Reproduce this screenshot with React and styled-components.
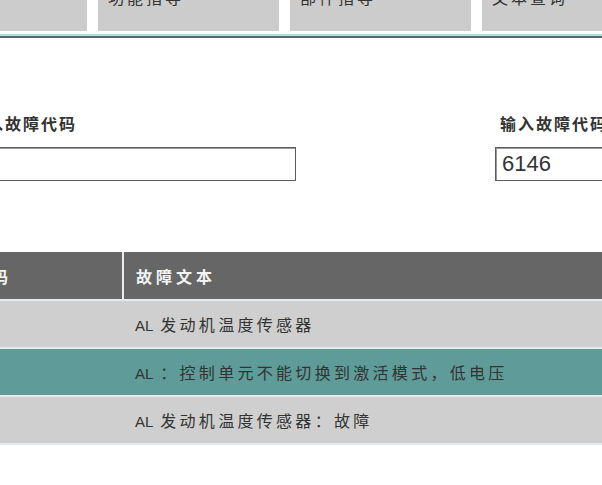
import styled, { createGlobalStyle } from "styled-components";

const GlobalStyle = createGlobalStyle`
	html, body {
		margin: 0;
		padding: 0;
		background: #ffffff;
		overflow: hidden;
	}
	body {
		font-family: "Liberation Sans", "Noto Sans CJK SC", sans-serif;
		color: #333333;
	}
`;

const Page = styled.div`
	width: 900px;
	margin-top: -15px;
	margin-left: -100px;
`;

const TabBar = styled.div`
	display: flex;
	gap: 11px;
	padding-left: 6px;
	padding-bottom: 3px;
	border-bottom: 2px solid #b9dcdb;
	box-shadow: 0 2px 0 #4a6d6d;
`;

const Tab = styled.div`
	width: 181px;
	height: 46px;
	flex-shrink: 0;
	box-sizing: border-box;
	padding-left: 10px;
	background: #cccccc;
	font-size: 16px;
	line-height: 24px;
	letter-spacing: 3px;
	color: #333333;
	font-family: "Noto Sans CJK SC", sans-serif;
`;

const Fields = styled.div`
	display: flex;
	gap: 199px;
	margin-top: 77px;
	margin-left: 64px;
`;

const Field = styled.div`
	display: flex;
	flex-direction: column;
	width: 332px;
	flex-shrink: 0;
`;

const Label = styled.label`
	padding-left: 5px;
	font-family: "Noto Sans CJK SC", sans-serif;
	font-weight: 700;
	font-size: 16px;
	line-height: 20px;
	letter-spacing: 2px;
	color: #333333;
	white-space: nowrap;
`;

const Input = styled.input`
	margin-top: 14px;
	height: 34px;
	box-sizing: border-box;
	border: 1px solid #5c5c5c;
	box-shadow: inset 1px 1px 0 #9a9a9a;
	padding: 0 6px;
	font-family: "Liberation Sans", sans-serif;
	font-size: 22px;
	color: #333333;
	background: #ffffff;
	outline: none;
`;

const Table = styled.div`
	margin-top: 71px;
	margin-left: 20px;
	display: flex;
	flex-direction: column;
`;

const Row = styled.div`
	display: grid;
	grid-template-columns: 202px 1fr;
	column-gap: 2px;
	height: ${(props) => props.$height || 46}px;
	border-bottom: 2px solid #e3ecec;
	background: ${(props) => (props.$active ? "#5f9b99" : "#cfcfcf")};
`;

const HeadRow = styled(Row)`
	background: #e9eeee;
`;

const HeadCell = styled.div`
	display: flex;
	align-items: center;
	padding-left: 12px;
	background: #666666;
	color: #f2f4f4;
	font-family: "Noto Sans CJK SC", sans-serif;
	font-weight: 700;
	font-size: 16px;
	letter-spacing: 4px;
`;

const Cell = styled.div`
	padding-left: 11px;
	line-height: 46px;
	font-family: "Noto Sans CJK SC", sans-serif;
	font-size: 16px;
	letter-spacing: 3.3px;
	color: #333333;
	white-space: pre;
	overflow: hidden;
`;

const Prefix = styled.span`
	font-family: "Liberation Sans", sans-serif;
	font-size: 15px;
	letter-spacing: 0;
`;

const tabs = ["故障记忆", "功能指导", "部件指导", "文本查询"];

const rows = [
	{ code: "04003", text: " 发动机温度传感器" },
	{ code: "06146", text: " ：控制单元不能切换到激活模式，低电压", active: true },
	{ code: "04004", text: " 发动机温度传感器：故障" },
];

const App = () => {
	return (
		<>
			<GlobalStyle />
			<Page>
				<TabBar>
					{tabs.map((t) => (
						<Tab key={t}>{t}</Tab>
					))}
				</TabBar>

				<Fields>
					<Field>
						<Label>输入故障代码</Label>
						<Input defaultValue="" />
					</Field>
					<Field>
						<Label>输入故障代码</Label>
						<Input defaultValue="6146" />
					</Field>
				</Fields>

				<Table>
					<HeadRow $height={47}>
						<HeadCell>故障代码</HeadCell>
						<HeadCell>故障文本</HeadCell>
					</HeadRow>
					{rows.map((r) => (
						<Row key={r.code} $active={r.active}>
							<Cell>{r.code}</Cell>
							<Cell>
								<Prefix>AL</Prefix>
								{r.text}
							</Cell>
						</Row>
					))}
				</Table>
			</Page>
		</>
	);
};

export default App;
